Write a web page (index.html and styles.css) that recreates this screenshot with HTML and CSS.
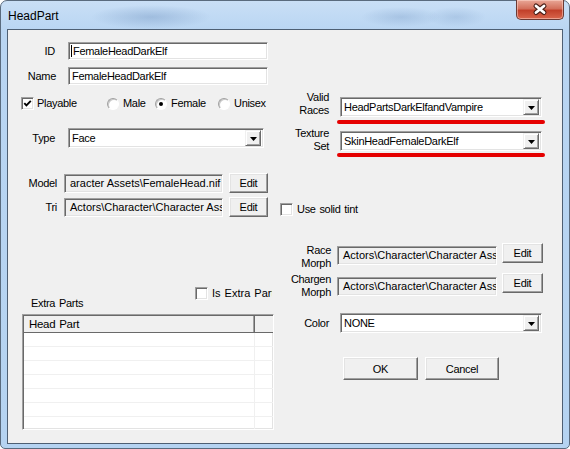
FILE: index.html
```html
<!DOCTYPE html>
<html lang="en">
<head>
    <meta charset="UTF-8">
    <title>HeadPart</title>
    <link rel="stylesheet" href="styles.css">
</head>
<body>
<div class="window">
    <div class="titlebar">
        <span class="title">HeadPart</span>
        <span class="close">
            <svg width="48" height="20" viewBox="0 0 48 20">
                <g transform="translate(18.5,5.5)">
                    <path d="M1.5 1.5 L9.5 8 M9.5 1.5 L1.5 8" stroke="#4a2019" stroke-width="5" stroke-linecap="round"/>
                    <path d="M1.5 1.5 L9.5 8 M9.5 1.5 L1.5 8" stroke="#fff" stroke-width="2.8" stroke-linecap="round"/>
                </g>
            </svg>
        </span>
    </div>

    <div class="client">
        <!-- left half: ids, flags, model files, extra parts -->
        <div class="col-left">
            <div class="row row-id">
                <span class="lbl lbl-47">ID</span>
                <div class="edit edit-200"><span class="caret"></span>FemaleHeadDarkElf</div>
            </div>
            <div class="row row-name">
                <span class="lbl lbl-48">Name</span>
                <div class="edit edit-200">FemaleHeadDarkElf</div>
            </div>
            <div class="row row-flags">
                <span class="check"><svg width="9" height="9" viewBox="0 0 9 9"><polyline points="1.3,4.2 3.4,6.4 7.8,1.8" fill="none" stroke="#000" stroke-width="1.9"/></svg></span>
                <span class="opt opt-playable">Playable</span>
                <span class="radio"></span><span class="opt opt-male">Male</span>
                <span class="radio on"></span><span class="opt opt-female">Female</span>
                <span class="radio"></span><span class="opt">Unisex</span>
            </div>
            <div class="row row-type">
                <span class="lbl lbl-47">Type</span>
                <div class="combo combo-196">
                    <span class="combo-text">Face</span>
                    <span class="drop"><svg width="7" height="4" viewBox="0 0 7 4"><polygon points="0,0 7,0 3.5,4" fill="#000"/></svg></span>
                </div>
            </div>
            <div class="row row-model">
                <span class="lbl lbl-49">Model</span>
                <div class="edit ro path">aracter Assets\FemaleHead.nif</div>
                <button class="btn btn-edit">Edit</button>
            </div>
            <div class="row row-tri">
                <span class="lbl lbl-49">Tri</span>
                <div class="edit ro path">Actors\Character\Character Ass</div>
                <button class="btn btn-edit">Edit</button>
            </div>
            <div class="row row-extra">
                <span class="extra-title">Extra Parts</span>
                <span class="check"></span>
                <span class="opt opt-extra">Is Extra Part</span>
            </div>
            <div class="list">
                <div class="list-head">
                    <span class="hcell hcell-main">Head Part</span>
                    <span class="hcell"></span>
                </div>
                <div class="list-row"><span></span><span></span></div>
                <div class="list-row"><span></span><span></span></div>
                <div class="list-row"><span></span><span></span></div>
                <div class="list-row"><span></span><span></span></div>
                <div class="list-row"><span></span><span></span></div>
                <div class="list-row"><span></span><span></span></div>
                <div class="list-row"><span></span><span></span></div>
            </div>
        </div>

        <!-- right half: races, texture, morphs, color, ok/cancel -->
        <div class="col-right">
            <div class="row2 row-races">
                <span class="lbl2 lbl-49">Valid<br>Races</span>
                <div class="ctl">
                    <div class="combo combo-202 top-6">
                        <span class="combo-text">HeadPartsDarkElfandVampire</span>
                        <span class="drop"><svg width="7" height="4" viewBox="0 0 7 4"><polygon points="0,0 7,0 3.5,4" fill="#000"/></svg></span>
                    </div>
                    <div class="mark"></div>
                </div>
            </div>
            <div class="row2 row-texture">
                <span class="lbl2 lbl-49">Texture<br>Set</span>
                <div class="ctl">
                    <div class="combo combo-202 top-4">
                        <span class="combo-text">SkinHeadFemaleDarkElf</span>
                        <span class="drop"><svg width="7" height="4" viewBox="0 0 7 4"><polygon points="0,0 7,0 3.5,4" fill="#000"/></svg></span>
                    </div>
                    <div class="mark mark-2"></div>
                </div>
            </div>
            <div class="row row-tint">
                <span class="check"></span>
                <span class="opt opt-tint">Use solid tint</span>
            </div>
            <div class="row2 row-race-morph">
                <span class="lbl2 lbl-51 top-1">Race<br>Morph</span>
                <div class="edit ro path path-160 top-3">Actors\Character\Character Ass</div>
                <button class="btn btn-edit btn-41">Edit</button>
            </div>
            <div class="row2 row-chargen">
                <span class="lbl2 lbl-51">Chargen<br>Morph</span>
                <div class="edit ro path path-160 top-4">Actors\Character\Character Ass</div>
                <button class="btn btn-edit btn-41 top-1">Edit</button>
            </div>
            <div class="row row-color">
                <span class="lbl lbl-49">Color</span>
                <div class="combo combo-202">
                    <span class="combo-text">NONE</span>
                    <span class="drop"><svg width="7" height="4" viewBox="0 0 7 4"><polygon points="0,0 7,0 3.5,4" fill="#000"/></svg></span>
                </div>
            </div>
            <div class="row row-buttons">
                <button class="btn btn-ok">OK</button>
                <button class="btn btn-cancel">Cancel</button>
            </div>
        </div>
    </div>
</div>
</body>
</html>
```

FILE: styles.css
```css
* {
    box-sizing: border-box;
}
body {
    margin: 0;
    font-family: "Liberation Sans", Arial, sans-serif;
    font-size: 11px;
    letter-spacing: -0.3px;
    word-spacing: 1px;
    color: #000;
    background: #fff;
}

/* window frame (aero glass) */
.window {
    width: 570px;
    height: 449px;
    border: 1px solid #5a6b7e;
    border-radius: 7px 7px 5px 5px;
    padding: 0 6px 4px;
    display: flex;
    flex-direction: column;
    background:
        radial-gradient(ellipse 60px 12px at 150px 16px, rgba(110, 145, 190, 0.4), transparent),
        radial-gradient(ellipse 40px 10px at 400px 16px, rgba(110, 145, 190, 0.3), transparent),
        radial-gradient(ellipse 30px 10px at 455px 16px, rgba(110, 145, 190, 0.25), transparent),
        linear-gradient(#c9dff6, #b9d5f2 30px, #b5d3f1);
}
.titlebar {
    height: 28px;
    display: flex;
    justify-content: space-between;
    align-items: flex-start;
}
.title {
    font-size: 12px;
    letter-spacing: 0;
    word-spacing: 0;
    line-height: 14px;
    margin: 8px 0 0 1px;
}
.close {
    width: 48px;
    height: 20px;
    margin: -1px -1px 0 0;
    border: 1px solid #6b3a34;
    border-top: none;
    border-radius: 0 0 5px 5px;
    background: linear-gradient(#e9a797, #d3705c 45%, #c2402a 55%, #d9664c);
    box-shadow: inset 0 0 0 1px rgba(255, 220, 210, 0.5);
    overflow: hidden;
}
.close svg {
    display: block;
    margin: -1px 0 0 -1px;
}

.client {
    flex: 1;
    border: 1px solid #4e5f73;
    background: #f0f0f0;
    display: flex;
}
.col-left {
    width: 266px;
    display: flex;
    flex-direction: column;
    overflow: hidden;
}
.col-right {
    margin-left: 6px;
    display: flex;
    flex-direction: column;
}

/* rows */
.row {
    display: flex;
    align-items: center;
}
.row2 {
    display: flex;
    align-items: flex-start;
}
.lbl, .lbl2 {
    text-align: right;
    line-height: 13px;
    flex-shrink: 0;
}
.lbl-47 { width: 47px; margin-right: 13px; }
.lbl-48 { width: 48px; margin-right: 12px; }
.lbl-49 { width: 49px; margin-right: 7px; }
.lbl-51 { width: 51px; margin-right: 6px; }
.row-races .lbl-49, .row-texture .lbl-49, .row-color .lbl-49 { margin-right: 11px; }
.top-1 { margin-top: 1px; }
.top-3 { margin-top: 3px; }
.top-4 { margin-top: 4px; }
.top-6 { margin-top: 6px; }

.row-id { margin-top: 12px; }
.row-name { margin-top: 7px; }
.row-flags { margin-top: 12px; height: 13px; }
.row-type { margin-top: 18px; }
.row-model { margin-top: 25px; }
.row-tri { margin-top: 4px; }
.row-extra { margin-top: 70px; align-items: flex-start; }
.row-races { margin-top: 61px; }
.row-texture { margin-top: 3px; }
.row-tint { margin-top: 46px; }
.row-race-morph { margin-top: 27px; }
.row-chargen { margin-top: 3px; }
.row-color { margin-top: 14px; }
.row-buttons { margin-top: 24px; padding-left: 63px; }

/* sunken edit box */
.edit {
    height: 18px;
    background: #fff;
    border: 1px solid;
    border-color: #a0a0a0 #fff #fff #a0a0a0;
    box-shadow: inset 1px 1px 0 #696969, inset -1px -1px 0 #e3e3e3;
    padding: 0 3px;
    line-height: 16px;
    white-space: nowrap;
    overflow: hidden;
}
.edit-200 { width: 200px; }
.edit.ro {
    background: #f0f0f0;
    height: 19px;
    line-height: 17px;
    padding: 0 0 0 5px;
    letter-spacing: 0;
    word-spacing: 0;
}
.path { width: 159px; }
.path-160 { width: 160px; }
.caret {
    display: inline-block;
    width: 1px;
    height: 12px;
    background: #000;
    vertical-align: -2px;
    margin: 0 1px 0 -1px;
}

/* combo box with drop button */
.combo {
    height: 20px;
    background: #fff;
    border: 1px solid;
    border-color: #a0a0a0 #fff #fff #a0a0a0;
    box-shadow: inset 1px 1px 0 #696969, inset -1px -1px 0 #e3e3e3;
    display: flex;
    align-items: center;
    padding: 2px 2px 2px 3px;
}
.combo-196 { width: 196px; }
.combo-202 { width: 202px; }
.combo-text {
    flex: 1;
    white-space: nowrap;
    overflow: hidden;
}
.drop {
    width: 16px;
    height: 16px;
    background: #f0f0f0;
    border: 1px solid;
    border-color: #f0f0f0 #696969 #696969 #f0f0f0;
    box-shadow: inset 1px 1px 0 #fff, inset -1px -1px 0 #a0a0a0;
    display: flex;
    align-items: center;
    justify-content: center;
}
.drop svg {
    display: block;
    margin-top: 1px;
}

/* red underline under the race / texture pickers */
.mark {
    width: 208px;
    height: 4px;
    margin: 3px 0 0 -3px;
    border-radius: 2px;
    background: #e50000;
}
.mark-2 {
    margin-top: 2px;
}

/* classic push buttons */
.btn {
    font: inherit;
    letter-spacing: inherit;
    color: #000;
    background: #f0f0f0;
    border: 1px solid;
    border-color: #fff #696969 #696969 #fff;
    box-shadow: inset -1px -1px 0 #a0a0a0, inset 1px 1px 0 #e3e3e3;
    padding: 0;
    margin: 0;
    flex-shrink: 0;
}
.btn-edit {
    width: 39px;
    height: 20px;
    margin-left: 6px;
}
.btn-41 {
    width: 41px;
    margin-left: 5px;
}
.btn-ok {
    width: 75px;
    height: 23px;
}
.btn-cancel {
    width: 74px;
    height: 23px;
    margin-left: 7px;
}

/* check boxes and radios */
.check {
    width: 13px;
    height: 13px;
    flex-shrink: 0;
    background: #fff;
    border: 1px solid;
    border-color: #a0a0a0 #fff #fff #a0a0a0;
    box-shadow: inset 1px 1px 0 #696969, inset -1px -1px 0 #e3e3e3;
    display: flex;
    align-items: center;
    justify-content: center;
}
.row-flags .check { margin-left: 13px; }
.opt {
    line-height: 13px;
    white-space: nowrap;
}
.opt-playable { width: 70px; margin-left: 3px; }
.opt-male { width: 32px; }
.opt-female { width: 47px; }
.radio {
    width: 12px;
    height: 12px;
    flex-shrink: 0;
    border-radius: 50%;
    border: 1px solid;
    border-color: #a0a0a0 #fff #fff #a0a0a0;
    background: #fff;
    box-shadow: inset 1px 1px 0 #c8c8c8;
    margin-right: 4px;
    display: flex;
    align-items: center;
    justify-content: center;
}
.radio.on::after {
    content: "";
    width: 4px;
    height: 4px;
    border-radius: 50%;
    background: #000;
}
.opt-tint { margin-left: 4px; }

/* extra parts */
.extra-title {
    margin: 10px 0 0 23px;
    width: 164px;
    line-height: 13px;
}
.opt-extra {
    margin-left: 4px;
    width: 60px;
    overflow: hidden;
    letter-spacing: 0;
}
.list {
    margin: 4px 0 0 14px;
    width: 252px;
    height: 116px;
    background: #fff;
    border: 1px solid;
    border-color: #a0a0a0 #fff #fff #a0a0a0;
    box-shadow: inset 1px 1px 0 #696969, inset -1px -1px 0 #e3e3e3;
    padding: 1px 0 0 1px;
    overflow: hidden;
}
.list-head {
    display: flex;
    height: 17px;
    background: #f0f0f0;
    border-bottom: 1px solid #696969;
}
.hcell {
    flex: 1;
    line-height: 16px;
    font-size: 11.5px;
}
.hcell-main {
    flex: 0 0 231px;
    padding-left: 5px;
    border-right: 1px solid #696969;
    box-shadow: inset -1px 0 0 #a0a0a0;
}
.list-row {
    display: flex;
    height: 14px;
    border-bottom: 1px solid #f0f0f0;
}
.list-row span:first-child {
    flex: 0 0 231px;
    border-right: 1px solid #f0f0f0;
}
```
